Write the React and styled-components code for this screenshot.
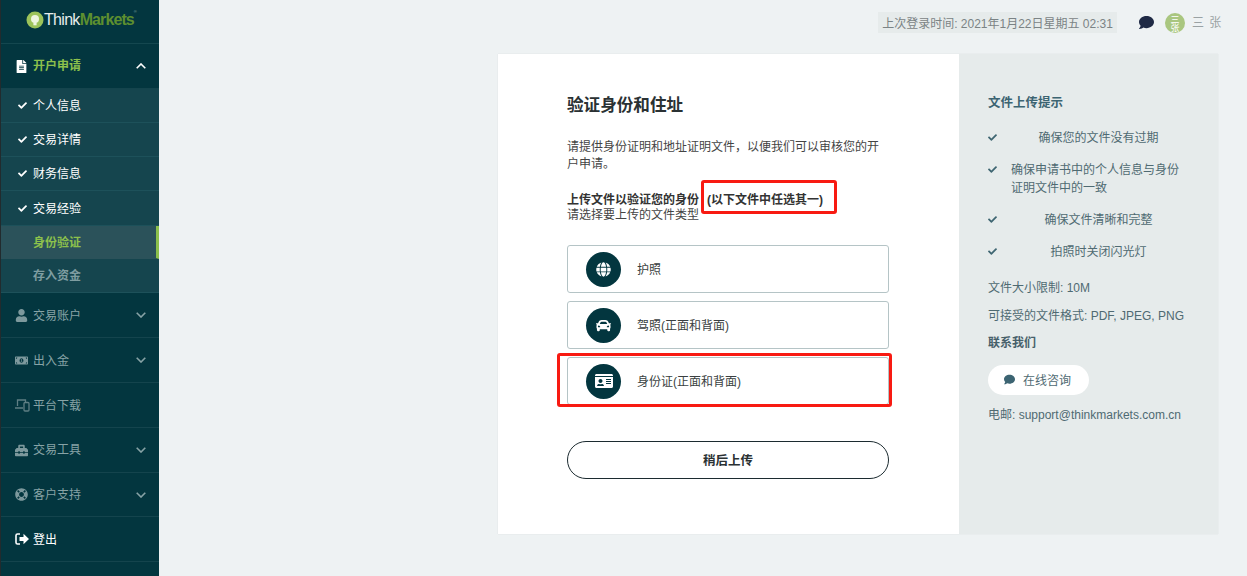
import React from "react";
import styled, { createGlobalStyle } from "styled-components";
import {
  FaFileAlt, FaCheck, FaUser, FaMoneyBillAlt, FaToolbox,
  FaLifeRing, FaComment, FaGlobe, FaCar, FaIdCard,
} from "react-icons/fa";

const FONT = `"Liberation Sans", "Noto Sans CJK SC", sans-serif`;

const Global = createGlobalStyle`
  html, body { margin: 0; padding: 0; height: 100%; background: #eef2f3; overflow: hidden; }
  body { font-family: ${FONT}; font-size: 12px; }
  * { box-sizing: border-box; }
`;

const Page = styled.div`
  display: flex;
  width: 1247px;
  height: 576px;
  overflow: hidden;
`;

const Side = styled.aside`
  width: 159px;
  flex: none;
  height: 576px;
  background: #03363f;
  border-left: 1px solid #222b2e;
  display: flex;
  flex-direction: column;
`;

const LogoBar = styled.div`
  height: 44px;
  border-bottom: 1px solid #14474f;
  display: flex;
  align-items: center;
  padding: 0 0 4px 25px;
  font-family: "Liberation Sans", sans-serif;
  font-size: 16px;
  letter-spacing: -0.7px;
  color: #e6ecec;
`;
const LogoMark = styled.svg`
  width: 18px;
  height: 18px;
  margin-right: 0;
  flex: none;
`;
const LogoGreen = styled.span`
  color: #5d8f2f;
  font-weight: 700;
  letter-spacing: -0.9px;
`;
const LogoR = styled.sup`
  font-size: 4px;
  color: #8aa;
  align-self: flex-start;
  margin-top: 9px;
`;

const NavRow = styled.div`
  height: ${p => p.$h || 45}px;
  flex: none;
  display: flex;
  align-items: center;
  padding: 0 12px 0 14px;
  border-bottom: 1px solid #14444d;
  color: ${p => p.$color || "#87a3a6"};
  font-weight: ${p => (p.$bold ? 700 : 400)};
  font-size: 12px;
`;
const NavIcon = styled.span`
  width: 18px;
  display: flex;
  align-items: center;
  justify-content: flex-start;
  font-size: 13px;
  color: ${p => p.$color || "#7d999d"};
  flex: none;
`;
const NavText = styled.span`
  flex: 1;
  margin-top: ${p => p.$lift ?? -1}px;
`;
const ChevIcon = styled.svg`
  width: 10px;
  height: 6px;
  margin-right: 1px;
  fill: none;
  stroke: ${p => p.$color || "#87a3a6"};
  stroke-width: 1.6;
`;

const SubRow = styled.div`
  height: ${p => p.$h || 34}px;
  flex: none;
  display: flex;
  align-items: center;
  padding-left: 17px;
  background: ${p => (p.$active ? "#2b525a" : "#15454e")};
  border-bottom: 1px solid ${p => (p.$active ? "#2b525a" : "#1d515a")};
  border-right: ${p => (p.$active ? "3px solid #8cc04c" : "none")};
  color: ${p => p.$color || "#fff"};
  font-weight: ${p => (p.$bold ? 700 : 400)};
`;
const SubText = styled.span`
  margin-top: -2px;
`;
const SubCheck = styled.span`
  width: 15px;
  display: flex;
  font-size: 9px;
  color: #fff;
  flex: none;
`;

const Main = styled.main`
  flex: 1;
  min-width: 0;
  display: flex;
  flex-direction: column;
  padding-right: 26px;
`;
const Top = styled.header`
  height: 54px;
  flex: none;
  padding-top: 12px;
  display: flex;
  justify-content: flex-end;
  align-items: flex-start;
`;
const LastLogin = styled.div`
  height: 21px;
  width: 239px;
  background: #e6ebeb;
  color: #7b8385;
  display: flex;
  align-items: center;
  justify-content: center;
  white-space: nowrap;
  font-size: 12px;
  margin-right: 22px;
`;
const ChatTop = styled.span`
  display: flex;
  color: #1f2a45;
  font-size: 15px;
  margin: 3px 11px 0 0;
`;
const Avatar = styled.span`
  width: 20px;
  height: 20px;
  border-radius: 50%;
  background: #a9c67f;
  color: #fff;
  overflow: hidden;
  font-size: 9px;
  line-height: 8px;
  text-align: center;
  padding-top: 3px;
  margin: 1px 7px 0 0;
  flex: none;
`;
const UserName = styled.span`
  color: #9aa2a4;
  font-size: 12px;
  line-height: 22px;
  letter-spacing: 1px;
  width: 29px;
  white-space: nowrap;
`;

const Card = styled.section`
  margin: 0 3px 0 339px;
  width: 720px;
  height: 480px;
  display: flex;
  background: #fff;
  box-shadow: 0 0 1px rgba(0,0,0,0.12);
`;
const Left = styled.div`
  position: relative;
  width: 461px;
  flex: none;
  padding: 41px 70px 0 69px;
  color: #333;
`;
const Title = styled.h1`
  margin: 0 0 22px;
  font-size: 16.6px;
  line-height: 22px;
  font-weight: 700;
  color: #2a3133;
`;
const Para = styled.p`
  margin: 0 0 19px;
  line-height: 17px;
  color: #444;
  width: 318px;
`;
const Strong = styled.div`
  font-weight: 700;
  line-height: 16px;
  color: #333;
  white-space: nowrap;
`;
const Aside = styled.span`
  margin-left: 8px;
`;
const Hint = styled.div`
  line-height: 14px;
  color: #444;
  margin-bottom: 23px;
`;
const DocList = styled.div`
  display: flex;
  flex-direction: column;
  gap: 8px;
  width: 322px;
`;
const Doc = styled.div`
  height: 48px;
  border: 1px solid #b5c4c6;
  border-radius: 3px;
  display: flex;
  align-items: center;
  padding-left: 18px;
  color: #3a3f41;
  background: #fff;
`;
const DocIcon = styled.span`
  width: 35px;
  height: 35px;
  border-radius: 50%;
  background: #03363f;
  color: #fff;
  display: flex;
  align-items: center;
  justify-content: center;
  font-size: ${p => p.$size || 15}px;
  margin-right: 16px;
  flex: none;
`;
const DocLabel = styled.span`
  margin-top: -2px;
`;
const Later = styled.button`
  display: block;
  margin-top: 36px;
  width: 322px;
  height: 38px;
  padding: 0 0 2px;
  border: 1px solid #1c2b30;
  border-radius: 19px;
  background: #fff;
  color: #2a3133;
  font: 700 12.5px ${FONT};
`;
const Mark = styled.div`
  position: absolute;
  left: ${p => p.$x}px;
  top: ${p => p.$y}px;
  width: ${p => p.$w}px;
  height: ${p => p.$h}px;
  border: 3px solid #f81a12;
  border-radius: 3px;
  pointer-events: none;
`;

const Right = styled.aside`
  flex: 1;
  min-width: 0;
  background: #e6ebeb;
  padding: 41px 30px 0 29px;
  color: #4f6a72;
  font-size: 12px;
`;
const Sub = styled.h2`
  margin: 0 0 17px;
  font-size: 12.5px;
  line-height: 17px;
  font-weight: 700;
  color: #3c6472;
`;
const Tip = styled.div`
  display: flex;
  align-items: flex-start;
  margin-bottom: ${p => p.$mb ?? 14}px;
  line-height: 18px;
`;
const TipCheck = styled.span`
  width: 23px;
  flex: none;
  display: flex;
  font-size: 9px;
  padding-top: 4px;
  color: #3f6672;
`;
const TipText = styled.span`
  flex: 1;
  text-align: ${p => (p.$left ? "left" : "center")};
  padding-right: ${p => p.$pr || 0}px;
`;
const Info = styled.div`
  line-height: 18px;
  margin-bottom: 10px;
  white-space: nowrap;
`;
const Contact = styled.div`
  line-height: 18px;
  font-weight: 700;
  margin: -1px 0 13px;
  color: #46606a;
`;
const Chat = styled.button`
  width: 101px;
  height: 30px;
  border-radius: 15px;
  border: 0;
  background: #fff;
  color: #4f6a72;
  display: flex;
  align-items: center;
  padding: 0 0 2px 16px;
  gap: 8px;
  font: 12px ${FONT};
  margin-bottom: 11px;
  & svg { font-size: 11px; color: #3c6472; }
`;
const Mail = styled.div`
  line-height: 18px;
  white-space: nowrap;
`;

const StrokeIcon = styled.svg`
  width: 15px;
  height: 14px;
`;

const Devices = () => (
  <StrokeIcon viewBox="0 0 15 14" fill="none" stroke="#5f7f84" strokeWidth="1.3">
    <path d="M2.5 8V2h8v2M0 10h8" />
    <rect x="9" y="4.5" width="5" height="8.5" rx="1" />
  </StrokeIcon>
);
const SignOut = () => (
  <StrokeIcon viewBox="0 0 15 14">
    <path d="M5 2H2.500A1.500 1.500 0 0 0 1 3.500v7A1.500 1.500 0 0 0 2.500 12H5" fill="none" stroke="#fff" strokeWidth="1.6" />
    <path d="M4.500 5h4V1.800L14 7l-5.500 5.200V9h-4z" fill="#fff" />
  </StrokeIcon>
);
const ChevDown = () => (
  <ChevIcon viewBox="0 0 10 6"><path d="M0.700 0.700 5 5 9.300 0.700" /></ChevIcon>
);
const ChevUp = () => (
  <ChevIcon viewBox="0 0 10 6" $color="#fff"><path d="M0.700 5.300 5 1 9.300 5.300" /></ChevIcon>
);

const done = ["个人信息", "交易详情", "财务信息", "交易经验"];
const sections = [
  { icon: <FaUser />, label: "交易账户", more: true },
  { icon: <FaMoneyBillAlt />, label: "出入金", more: true },
  { icon: <Devices />, label: "平台下载" },
  { icon: <FaToolbox />, label: "交易工具", more: true, lift: -3 },
  { icon: <FaLifeRing />, label: "客户支持", more: true, h: 44, lift: -3 },
];
const subHeights = [34, 34, 34, 35];

export default function App() {
  return (
    <Page>
      <Global />
      <Side>
        <LogoBar>
          <LogoMark viewBox="0 0 18 18">
            <circle cx="9" cy="9" r="8.500" fill="#9cc35a" />
            <circle cx="9" cy="8" r="4" fill="#eef5df" />
            <rect x="7.400" y="11.500" width="3.200" height="2.800" fill="#eef5df" />
          </LogoMark>
          Think<LogoGreen>Markets</LogoGreen><LogoR>®</LogoR>
        </LogoBar>
        <NavRow $color="#8cc04c" $bold>
          <NavIcon $color="#fff"><FaFileAlt /></NavIcon>
          <NavText $lift={-3}>开户申请</NavText>
          <ChevUp />
        </NavRow>
        {done.map((d, i) => (
          <SubRow key={d} $h={subHeights[i]}>
            <SubCheck><FaCheck /></SubCheck><SubText>{d}</SubText>
          </SubRow>
        ))}
        <SubRow $active $color="#8cc04c" $bold $h={33}>
          <SubCheck /><SubText>身份验证</SubText>
        </SubRow>
        <SubRow $color="#7f9da1" $bold>
          <SubCheck /><SubText>存入资金</SubText>
        </SubRow>
        {sections.map(s => (
          <NavRow key={s.label} $h={s.h}>
            <NavIcon>{s.icon}</NavIcon>
            <NavText $lift={s.lift}>{s.label}</NavText>
            {s.more && <ChevDown />}
          </NavRow>
        ))}
        <NavRow $color="#fff">
          <NavIcon><SignOut /></NavIcon>
          <NavText>登出</NavText>
        </NavRow>
      </Side>
      <Main>
        <Top>
          <LastLogin>上次登录时间: 2021年1月22日星期五 02:31</LastLogin>
          <ChatTop><FaComment /></ChatTop>
          <Avatar>三<br />张</Avatar>
          <UserName>三 张</UserName>
        </Top>
        <Card>
          <Left>
            <Title>验证身份和住址</Title>
            <Para>请提供身份证明和地址证明文件，以便我们可以审核您的开户申请。</Para>
            <Strong>上传文件以验证您的身份<Aside>(以下文件中任选其一)</Aside></Strong>
            <Hint>请选择要上传的文件类型</Hint>
            <DocList>
              <Doc><DocIcon><FaGlobe /></DocIcon><DocLabel>护照</DocLabel></Doc>
              <Doc><DocIcon><FaCar /></DocIcon><DocLabel>驾照(正面和背面)</DocLabel></Doc>
              <Doc><DocIcon $size={18}><FaIdCard /></DocIcon><DocLabel>身份证(正面和背面)</DocLabel></Doc>
            </DocList>
            <Later>稍后上传</Later>
            <Mark $x={203} $y={126} $w={136} $h={34} />
            <Mark $x={59} $y={299} $w={335} $h={54} />
          </Left>
          <Right>
            <Sub>文件上传提示</Sub>
            <Tip><TipCheck><FaCheck /></TipCheck><TipText $pr={2}>确保您的文件没有过期</TipText></Tip>
            <Tip><TipCheck><FaCheck /></TipCheck><TipText $left>确保申请书中的个人信息与身份证明文件中的一致</TipText></Tip>
            <Tip><TipCheck><FaCheck /></TipCheck><TipText $pr={2}>确保文件清晰和完整</TipText></Tip>
            <Tip $mb={18}><TipCheck><FaCheck /></TipCheck><TipText $pr={2}>拍照时关闭闪光灯</TipText></Tip>
            <Info>文件大小限制: 10M</Info>
            <Info>可接受的文件格式: PDF, JPEG, PNG</Info>
            <Contact>联系我们</Contact>
            <Chat><FaComment />在线咨询</Chat>
            <Mail>电邮: support@thinkmarkets.com.cn</Mail>
          </Right>
        </Card>
      </Main>
    </Page>
  );
}
